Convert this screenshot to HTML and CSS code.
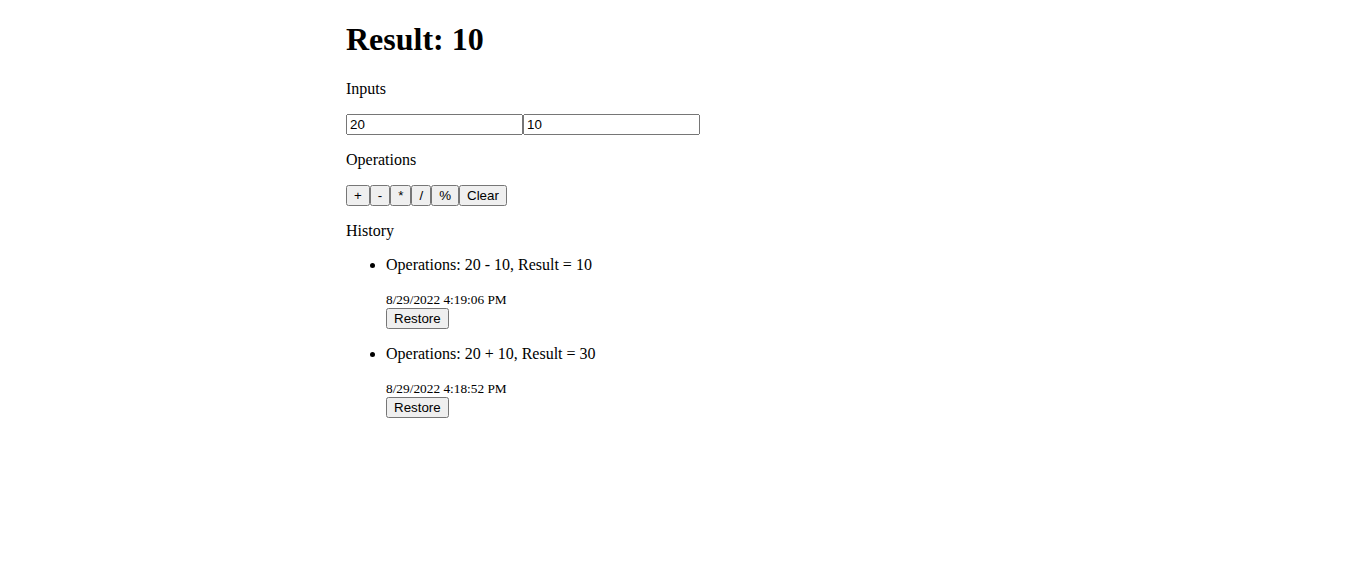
FILE: index.html
```html
<!DOCTYPE html>
<html>
<head>
<meta charset="utf-8">
<title>Calculator</title>
<link rel="stylesheet" href="styles.css">
</head>
<body>
<div class="app">
<h1>Result: 10</h1>
<p>Inputs</p>
<div class="inputs"><input class="field" type="text" value="20"><input class="field" type="text" value="10"></div>
<p>Operations</p>
<div class="ops"><button class="btn">+</button><button class="btn">-</button><button class="btn">*</button><button class="btn">/</button><button class="btn">%</button><button class="btn">Clear</button></div>
<p>History</p>
<ul class="history">
<li>
<p>Operations: 20 - 10, Result = 10</p>
<div class="meta"><small class="date">8/29/2022 4:19:06 PM</small><br><button class="btn">Restore</button></div>
</li>
<li>
<p>Operations: 20 + 10, Result = 30</p>
<div class="meta"><small class="date">8/29/2022 4:18:52 PM</small><br><button class="btn">Restore</button></div>
</li>
</ul>
</div>
</body>
</html>
```
FILE: styles.css
```css
body {
  margin: 0 8px 8px;
  font-family: "Liberation Serif", "Times New Roman", serif;
  font-size: 16px;
  color: #000;
  background: #fff;
}
.app {
  width: 673px;
  margin: 0 auto;
}
.field {
  font-family: "Liberation Sans", Arial, sans-serif;
  font-size: 13.333px;
  width: 169px;
}
.btn {
  font-family: "Liberation Sans", Arial, sans-serif;
  font-size: 13.333px;
}
```
